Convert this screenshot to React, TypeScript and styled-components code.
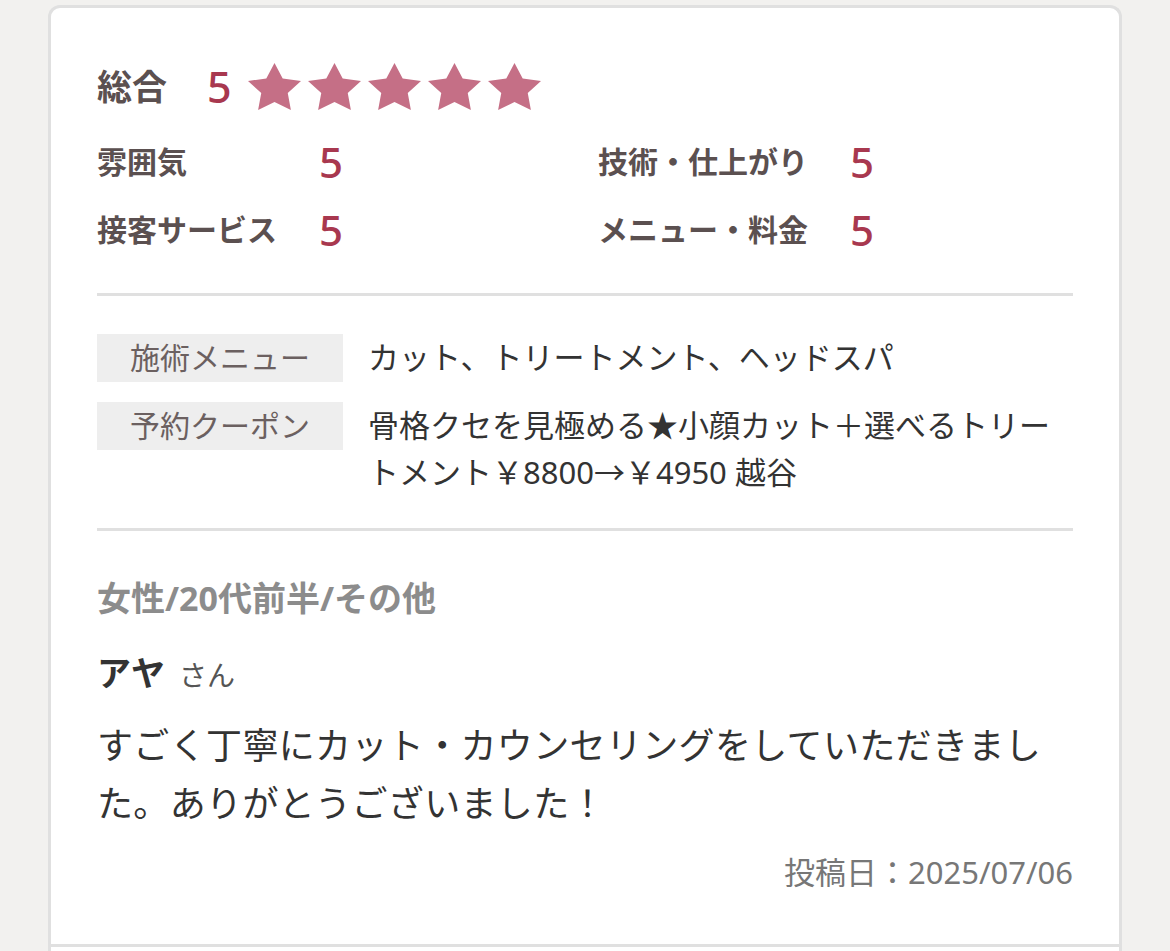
import React from "react";
import styled, { createGlobalStyle } from "styled-components";

const GlobalStyle = createGlobalStyle`
  html, body {
    margin: 0;
    padding: 0;
    background: #f2f1ef;
  }
  body {
    font-family: "Noto Sans", "Noto Sans CJK JP", sans-serif;
    color: #333;
  }
  * { box-sizing: border-box; }
`;

const Page = styled.div`
  padding: 5px 48px 0 48px;
  width: 1170px;
`;

const ReviewList = styled.div`
  background: #fff;
  border: 3px solid #e0e0e0;
  border-bottom: none;
  border-radius: 12px 12px 0 0;
`;

const ReviewItem = styled.article`
  padding: 0 46px;
  border-bottom: 3px solid #e0e0e0;
`;

const NextItem = styled.div`
  height: 40px;
`;

const Section = styled.section<{ $top: number; $bottom: number; $divider?: boolean }>`
  padding-top: ${(p) => p.$top}px;
  padding-bottom: ${(p) => p.$bottom}px;
  border-bottom: ${(p) => (p.$divider ? "3px solid #e0e0e0" : "none")};
`;

const OverallRow = styled.div`
  display: flex;
  align-items: center;
  height: 56px;
`;

const OverallLabel = styled.span`
  font-size: 35px;
  font-weight: 700;
  color: #5b5050;
  line-height: 1;
`;

const OverallScore = styled.span`
  font-size: 43px;
  font-weight: 500;
  color: #a8384f;
  line-height: 1;
  margin-left: 40px;
  margin-right: 16px;
`;

const Stars = styled.div`
  display: flex;
  gap: 7px;
  align-items: center;
`;

const StarSvg = styled.svg`
  width: 53px;
  height: 47px;
  display: block;
`;

const SubGrid = styled.div`
  display: grid;
  grid-template-columns: 501px 1fr;
  margin-top: 26px;
`;

const SubColumn = styled.div`
  display: grid;
  grid-template-columns: auto 1fr;
  column-gap: 42px;
  row-gap: 24px;
  align-items: center;
`;

const SubLabel = styled.span`
  font-size: 30px;
  font-weight: 700;
  color: #5b5050;
  line-height: 44px;
  white-space: nowrap;
`;

const SubScore = styled.span`
  font-size: 42px;
  font-weight: 500;
  color: #a8384f;
  line-height: 44px;
`;

const InfoTable = styled.div`
  display: grid;
  grid-template-columns: 246px 1fr;
  column-gap: 25px;
  row-gap: 20px;
  align-items: start;
`;

const InfoLabel = styled.div`
  background: #eeeeee;
  height: 48px;
  display: flex;
  align-items: center;
  justify-content: center;
  font-size: 30px;
  color: #6b6060;
  line-height: 1;
`;

const InfoValue = styled.div`
  font-size: 31px;
  color: #333;
  line-height: 47px;
`;

const Demographic = styled.div`
  font-size: 34px;
  font-weight: 700;
  color: #8c8c8c;
  line-height: 48px;
`;

const NameRow = styled.div`
  margin-top: 27px;
  display: flex;
  align-items: baseline;
  gap: 14px;
  line-height: 48px;
`;

const Name = styled.span`
  font-size: 34px;
  font-weight: 700;
  color: #333;
`;

const Honorific = styled.span`
  font-size: 28px;
  color: #555;
`;

const Body = styled.p`
  margin: 18px 0 0 0;
  font-size: 36px;
  letter-spacing: 0.35px;
  color: #333;
  line-height: 58px;
`;

const PostedDate = styled.div`
  margin-top: 19px;
  text-align: right;
  font-size: 31px;
  color: #777;
  line-height: 40px;
`;

const Star = () => (
  <StarSvg viewBox="2 2 20 19.02" preserveAspectRatio="none" aria-hidden>
    <polygon
      points="12,2 15.09,8.26 22,9.27 17,14.14 18.18,21.02 12,17.77 5.82,21.02 7,14.14 2,9.27 8.91,8.26"
      fill="#c56f86"
    />
  </StarSvg>
);

const leftRatings = [
  { label: "雰囲気", score: 5 },
  { label: "接客サービス", score: 5 },
];
const rightRatings = [
  { label: "技術・仕上がり", score: 5 },
  { label: "メニュー・料金", score: 5 },
];

export default function App() {
  return (
    <>
      <GlobalStyle />
      <Page>
        <ReviewList>
          <ReviewItem>
            <Section $top={50} $bottom={41} $divider>
              <OverallRow>
                <OverallLabel>総合</OverallLabel>
                <OverallScore>5</OverallScore>
                <Stars>
                  {[0, 1, 2, 3, 4].map((i) => (
                    <Star key={i} />
                  ))}
                </Stars>
              </OverallRow>
              <SubGrid>
                <SubColumn>
                  {leftRatings.map((r) => (
                    <React.Fragment key={r.label}>
                      <SubLabel>{r.label}</SubLabel>
                      <SubScore>{r.score}</SubScore>
                    </React.Fragment>
                  ))}
                </SubColumn>
                <SubColumn>
                  {rightRatings.map((r) => (
                    <React.Fragment key={r.label}>
                      <SubLabel>{r.label}</SubLabel>
                      <SubScore>{r.score}</SubScore>
                    </React.Fragment>
                  ))}
                </SubColumn>
              </SubGrid>
            </Section>
            <Section $top={38} $bottom={32} $divider>
              <InfoTable>
                <InfoLabel>施術メニュー</InfoLabel>
                <InfoValue>カット、トリートメント、ヘッドスパ</InfoValue>
                <InfoLabel>予約クーポン</InfoLabel>
                <InfoValue>
                  骨格クセを見極める★小顔カット＋選べるトリートメント￥8800→￥4950 越谷
                </InfoValue>
              </InfoTable>
            </Section>
            <Section $top={43} $bottom={52}>
              <Demographic>女性/20代前半/その他</Demographic>
              <NameRow>
                <Name>アヤ</Name>
                <Honorific>さん</Honorific>
              </NameRow>
              <Body>
                すごく丁寧にカット・カウンセリングをしていただきました。ありがとうございました！
              </Body>
              <PostedDate>投稿日：2025/07/06</PostedDate>
            </Section>
          </ReviewItem>
          <NextItem />
        </ReviewList>
      </Page>
    </>
  );
}
